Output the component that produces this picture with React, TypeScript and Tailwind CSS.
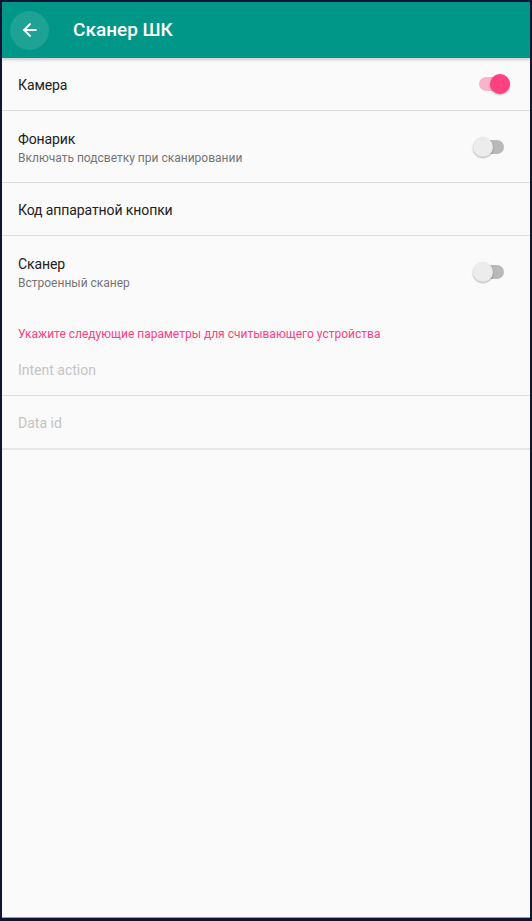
import { ArrowLeft } from 'lucide-react';

function Toggle({ on }: { on: boolean }) {
  return (
    <div className="relative w-[40px] h-[20px] shrink-0">
      <div
        className={`absolute left-[8px] top-[3px] w-[23px] h-[14px] rounded-full ${on ? 'bg-[#f9b4cc]' : 'bg-[#b9b9b9]'}`}
      />
      <div
        className={`absolute top-0 w-[20px] h-[20px] rounded-full shadow-[0_1px_2px_rgba(0,0,0,0.3)] ${on ? 'left-[19px] bg-[#ff4081]' : 'left-0 bg-[#ececec]'}`}
      />
    </div>
  );
}

function Divider() {
  return <div className="h-px bg-[#dedede]" />;
}

function SettingRow({ title, subtitle, toggle }: { title: string; subtitle?: string; toggle?: boolean }) {
  return (
    <div className={`flex items-center pl-[16px] pr-[19px] ${subtitle ? 'h-[71px]' : 'h-[52px]'}`}>
      <div className={`flex-1 flex flex-col ${subtitle ? 'mt-[2px]' : 'mt-[1px]'}`}>
        <span className="text-[14px] leading-[20px] tracking-[-0.1px] text-[#212121]">{title}</span>
        {subtitle && <span className="text-[12px] leading-[18px] text-[#757575]">{subtitle}</span>}
      </div>
      {toggle !== undefined && (
        <div className={subtitle ? '-mr-[2px]' : ''}>
          <Toggle on={toggle} />
        </div>
      )}
    </div>
  );
}

export default function App() {
  return (
    <div
      className="w-[532px] h-[921px] bg-[#0f1535] pt-[2px] pl-[2px] pr-[2px] pb-[3px]"
      style={{ fontFamily: 'Roboto, "Noto Sans", sans-serif' }}
    >
      <div className="h-full bg-[#fafafa] flex flex-col border-b border-[#9e9e9e]">
        <header className="h-[56px] bg-[#009688] flex items-center pl-[8px] shadow-[0_2px_3px_rgba(0,0,0,0.18)] relative z-10">
          <div className="w-[39px] h-[39px] rounded-full bg-[#1ea293] flex items-center justify-center">
            <ArrowLeft size={20} strokeWidth={2.4} color="#ffffff" />
          </div>
          <h1 className="ml-[24px] text-[19px] font-medium text-white">Сканер ШК</h1>
        </header>

        <SettingRow title="Камера" toggle={true} />
        <Divider />
        <SettingRow title="Фонарик" subtitle="Включать подсветку при сканировании" toggle={false} />
        <Divider />
        <SettingRow title="Код аппаратной кнопки" />
        <Divider />
        <SettingRow title="Сканер" subtitle="Встроенный сканер" toggle={false} />

        <div className="pl-[16px] pt-[18px] text-[12px] leading-[18px] text-[#ff4081]">
          Укажите следующие параметры для считывающего устройства
        </div>
        <div className="h-[52px] flex items-center pl-[16px] pt-[2px] text-[14px] text-[#c4c4c4]">Intent action</div>
        <Divider />
        <div className="h-[52px] flex items-center pl-[16px] pt-[2px] text-[14px] text-[#c4c4c4]">Data id</div>
        <div className="h-[2px] bg-[#e6e6e6]" />
      </div>
    </div>
  );
}
